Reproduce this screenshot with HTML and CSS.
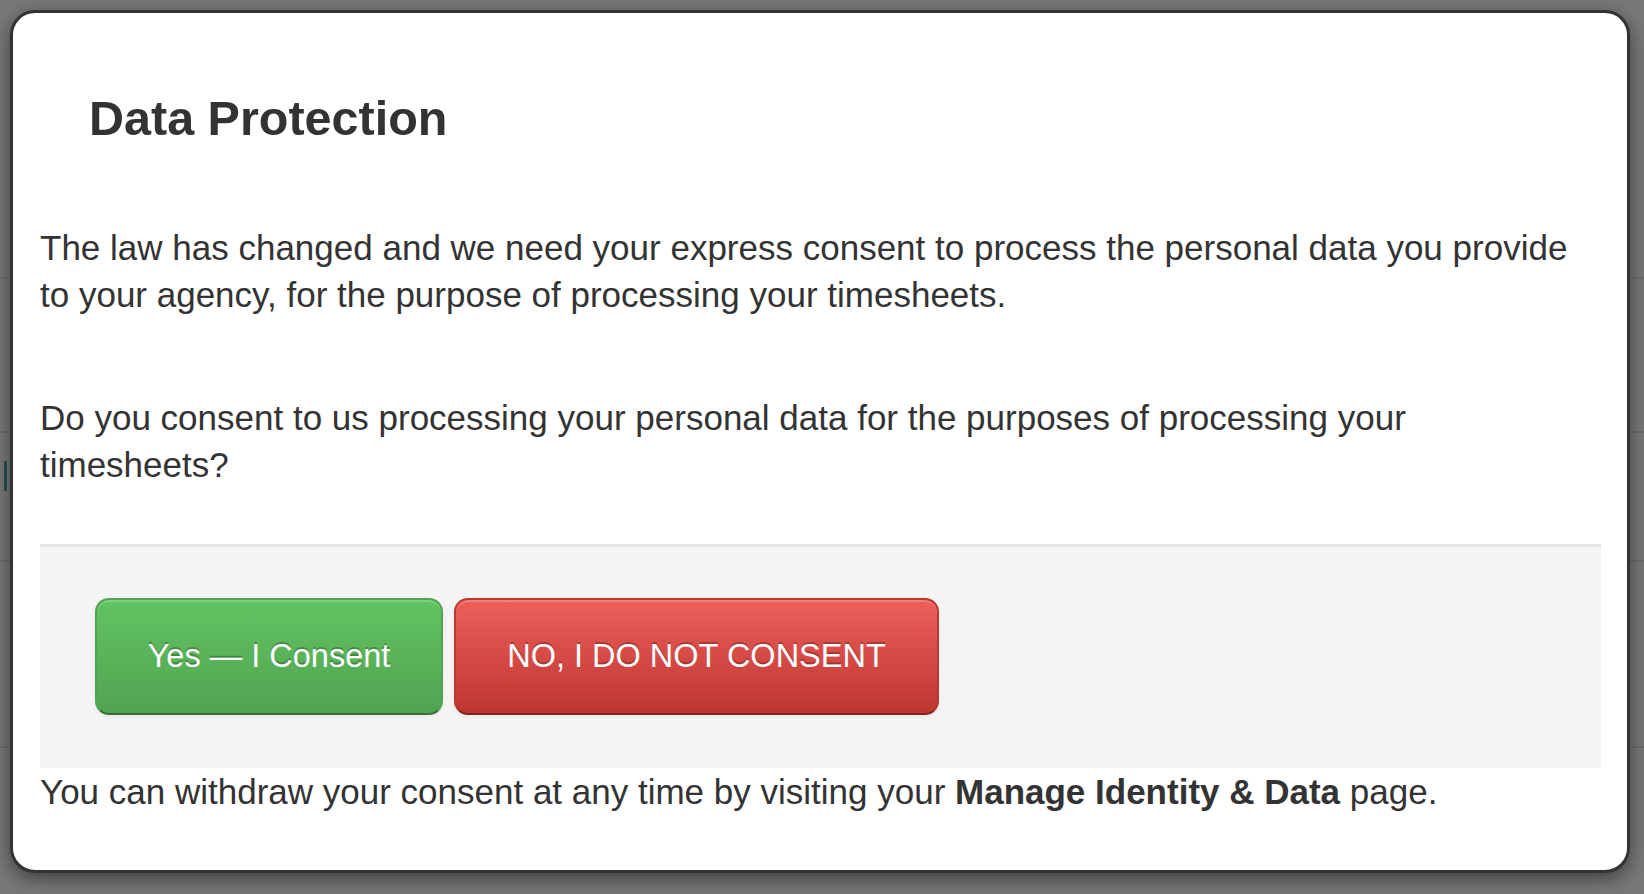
FILE: index.html
```html
<!DOCTYPE html>
<html lang="en">
<head>
<meta charset="utf-8">
<title>Data Protection</title>
<link rel="stylesheet" href="styles.css">
</head>
<body>
<div class="page">
  <div class="row row-a"></div>
  <div class="row row-b"></div>
  <div class="row row-c"><span class="peek">8</span></div>
  <div class="row row-d"></div>
</div>
<div class="backdrop"></div>
<div class="modal" role="dialog" aria-labelledby="dp-title">
  <div class="modal-header">
    <h3 id="dp-title" class="modal-title">Data Protection</h3>
  </div>
  <div class="modal-body">
    <p class="lead-text">The law has changed and we need your express consent to process the personal data you provide to your agency, for the purpose of processing your timesheets.</p>
    <p class="question">Do you consent to us processing your personal data for the purposes of processing your timesheets?</p>
  </div>
  <div class="modal-footer">
    <button class="btn btn-success">Yes — I Consent</button>
    <button class="btn btn-danger">NO, I DO NOT CONSENT</button>
  </div>
  <p class="note">You can withdraw your consent at any time by visiting your <strong>Manage Identity &amp; Data</strong> page.</p>
</div>
</body>
</html>
```

FILE: styles.css
```css
* { box-sizing: border-box; }

html, body {
  margin: 0;
  padding: 0;
  width: 1644px;
  height: 894px;
  overflow: hidden;
}

body {
  font-family: "Liberation Sans", Arial, sans-serif;
  color: #333;
  background: #eeeeee;
  position: relative;
}

/* page underneath the overlay */
.page {
  display: flex;
  flex-direction: column;
}
.row {
  border-bottom: 2px solid #d6d6d6;
  position: relative;
}
.row-a { height: 279px; }
.row-b { height: 154px; }
.row-c { height: 129px; }
.row-d { height: 186px; }
.peek {
  position: absolute;
  left: 4px;
  top: 28px;
  font-size: 28px;
  color: #6b4a1c;
  border-left: 3px solid #4aa3a8;
  padding-left: 2px;
  line-height: 30px;
}

.backdrop {
  position: absolute;
  inset: 0;
  background: rgba(0, 0, 0, 0.5);
}

.modal {
  position: absolute;
  left: 10px;
  top: 10px;
  width: 1620px;
  height: 863px;
  background: #fff;
  border: 3px solid #333;
  border-radius: 25px;
  box-shadow: 0 6px 18px rgba(0, 0, 0, 0.45);
  padding: 0 26px 0 27px;
  display: flex;
  flex-direction: column;
}

.modal-header {
  padding: 80px 0 0 49px;
}
.modal-title {
  margin: 0;
  font-size: 48.5px;
  line-height: 50px;
  font-weight: bold;
  color: #333;
}

.modal-body p {
  margin: 0;
  font-size: 35px;
  line-height: 47px;
}
.lead-text { margin-top: 81px !important; }
.question { margin-top: 76px !important; }

.modal-footer {
  margin-top: 56px;
  background: #f4f4f4;
  border-top: 3px solid #e5e5e5;
  padding: 51px 0 53px 55px;
  display: flex;
  gap: 11px;
}

.btn {
  height: 117px;
  font-family: "Liberation Sans", Arial, sans-serif;
  font-size: 32.5px;
  color: #fff;
  border-radius: 14px;
  border: 2px solid rgba(0, 0, 0, 0.1);
  border-bottom-color: rgba(0, 0, 0, 0.25);
  text-shadow: 0 -2px 0 rgba(0, 0, 0, 0.25);
  box-shadow: inset 0 2px 0 rgba(255, 255, 255, 0.2), 0 2px 4px rgba(0, 0, 0, 0.05);
  padding: 0;
  cursor: pointer;
}
.btn-success {
  width: 348px;
  background: linear-gradient(to bottom, #62c462, #51a351);
  border-color: #51a351 #51a351 #387038;
}
.btn-danger {
  width: 485px;
  background: linear-gradient(to bottom, #ee5f5b, #bd362f);
  border-color: #bd362f #bd362f #802420;
}

.note {
  margin: 0;
  font-size: 35px;
  line-height: 47px;
}
.note strong { font-weight: bold; }
```
